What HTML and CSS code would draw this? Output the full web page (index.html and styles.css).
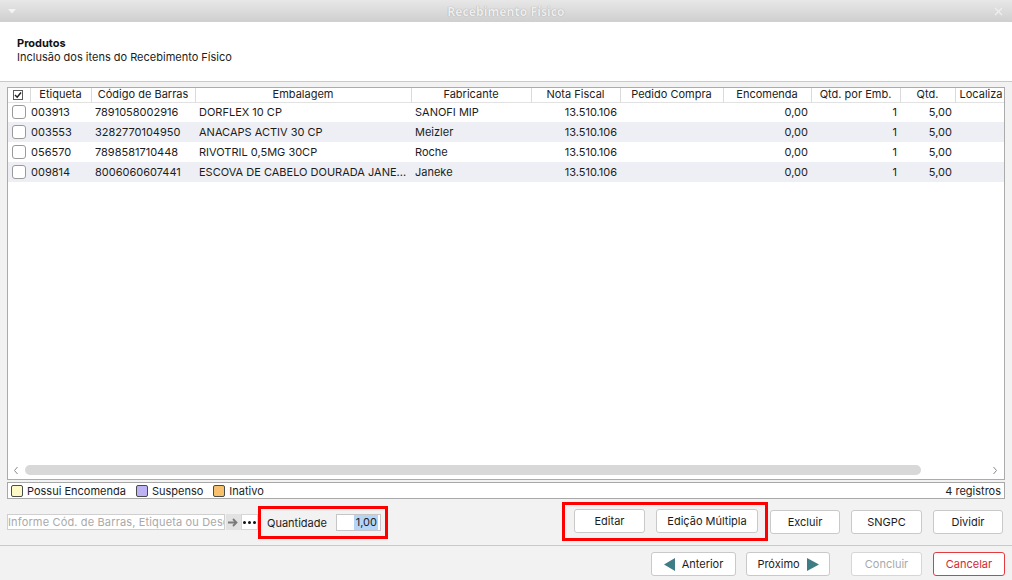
FILE: index.html
```html
<!DOCTYPE html>
<html lang="pt-BR">
<head>
<meta charset="utf-8">
<title>Recebimento Físico</title>
<link rel="stylesheet" href="styles.css">
</head>
<body>
<div class="window">
  <div class="titlebar">
    <div class="tb-left">
      <svg class="tb-menu" width="8" height="5" viewBox="0 0 8 5"><path d="M0 0H8L4 4.5Z" fill="#f4f4f4"/></svg>
    </div>
    <div class="tb-title">Recebimento Físico</div>
    <div class="tb-right">
      <svg class="tb-close" width="9" height="9" viewBox="0 0 9 9"><path d="M1 1L8 8M8 1L1 8" stroke="#eeeeee" stroke-width="1.4"/></svg>
    </div>
  </div>

  <div class="header">
    <div class="h-title">Produtos</div>
    <div class="h-sub">Inclusão dos itens do Recebimento Físico</div>
  </div>

  <div class="content">
    <div class="grid-box">
      <div class="grid-scroll">
        <table class="grid">
          <colgroup>
            <col class="c-chk"><col class="c-etq"><col class="c-cod"><col class="c-emb"><col class="c-fab"><col class="c-nf"><col class="c-ped"><col class="c-enc"><col class="c-qpe"><col class="c-qtd"><col class="c-loc">
          </colgroup>
          <thead>
            <tr>
              <th class="chk-cell"><span class="hchk"><svg width="8" height="8" viewBox="0 0 8 8"><path d="M1 4L3.2 6.2L7 1.5" fill="none" stroke="#222" stroke-width="1.5"/></svg></span></th>
              <th>Etiqueta</th>
              <th>Código de Barras</th>
              <th>Embalagem</th>
              <th>Fabricante</th>
              <th>Nota Fiscal</th>
              <th>Pedido Compra</th>
              <th>Encomenda</th>
              <th>Qtd. por Emb.</th>
              <th>Qtd.</th>
              <th class="left">Localiza</th>
            </tr>
          </thead>
          <tbody>
            <tr>
              <td class="chk-cell"><span class="rchk"></span></td>
              <td class="etq">003913</td><td>7891058002916</td><td>DORFLEX 10 CP</td><td>SANOFI MIP</td>
              <td class="num">13.510.106</td><td></td><td class="num">0,00</td><td class="num">1</td><td class="num">5,00</td><td></td>
            </tr>
            <tr class="alt">
              <td class="chk-cell"><span class="rchk"></span></td>
              <td class="etq">003553</td><td>3282770104950</td><td>ANACAPS ACTIV 30 CP</td><td>Meizler</td>
              <td class="num">13.510.106</td><td></td><td class="num">0,00</td><td class="num">1</td><td class="num">5,00</td><td></td>
            </tr>
            <tr>
              <td class="chk-cell"><span class="rchk"></span></td>
              <td class="etq">056570</td><td>7898581710448</td><td>RIVOTRIL 0,5MG 30CP</td><td>Roche</td>
              <td class="num">13.510.106</td><td></td><td class="num">0,00</td><td class="num">1</td><td class="num">5,00</td><td></td>
            </tr>
            <tr class="alt">
              <td class="chk-cell"><span class="rchk"></span></td>
              <td class="etq">009814</td><td>8006060607441</td><td>ESCOVA DE CABELO DOURADA JANE...</td><td>Janeke</td>
              <td class="num">13.510.106</td><td></td><td class="num">0,00</td><td class="num">1</td><td class="num">5,00</td><td></td>
            </tr>
          </tbody>
        </table>
      </div>
      <div class="hscroll">
        <svg class="chev" width="6" height="9" viewBox="0 0 6 9"><path d="M4.5 1L1.5 4.5L4.5 8" fill="none" stroke="#8a8a8a" stroke-width="1"/></svg>
        <div class="track"><div class="thumb"></div></div>
        <svg class="chev" width="6" height="9" viewBox="0 0 6 9"><path d="M1.5 1L4.5 4.5L1.5 8" fill="none" stroke="#8a8a8a" stroke-width="1"/></svg>
      </div>
    </div>

    <div class="legend">
      <span class="sw sw-yellow"></span><span class="lg-label">Possui Encomenda</span>
      <span class="sw sw-purple"></span><span class="lg-label">Suspenso</span>
      <span class="sw sw-orange"></span><span class="lg-label">Inativo</span>
      <span class="lg-count">4 registros</span>
    </div>

    <div class="controls">
      <div class="ctl-left">
        <div class="search">Informe Cód. de Barras, Etiqueta ou Descrição</div>
        <div class="go-btn"><svg width="11" height="9" viewBox="0 0 11 9"><path d="M0 4.5H8M5 1L8.5 4.5L5 8" fill="none" stroke="#7a7a7a" stroke-width="1.8"/></svg></div>
        <div class="dots-btn"><svg width="13" height="3" viewBox="0 0 13 3"><circle cx="1.5" cy="1.5" r="1.5" fill="#111"/><circle cx="6.5" cy="1.5" r="1.5" fill="#111"/><circle cx="11.5" cy="1.5" r="1.5" fill="#111"/></svg></div>
        <div class="mark mark-qty">
          <span class="qty-label">Quantidade</span>
          <div class="qty-input"><span class="sel">1,00</span></div>
        </div>
      </div>
      <div class="ctl-right">
        <div class="mark mark-edit">
          <button class="btn w71">Editar</button>
          <button class="btn w102">Edição Múltipla</button>
        </div>
        <button class="btn w70 after-mark">Excluir</button>
        <button class="btn w71">SNGPC</button>
        <button class="btn w70">Dividir</button>
      </div>
    </div>
  </div>

  <div class="footer">
    <button class="btn nav w85">
      <svg width="11" height="13" viewBox="0 0 11 13"><path d="M11 0V13L0 6.5Z" fill="#3e7d85"/></svg>
      <span>Anterior</span>
    </button>
    <button class="btn nav w84">
      <span>Próximo</span>
      <svg width="12" height="13" viewBox="0 0 12 13"><path d="M0 0V13L12 6.5Z" fill="#3e7d85"/></svg>
    </button>
    <button class="btn w71 disabled gap-l">Concluir</button>
    <button class="btn w72 danger gap-c">Cancelar</button>
  </div>
</div>
</body>
</html>
```

FILE: styles.css
```css
* { box-sizing: border-box; }

html, body {
  margin: 0;
  padding: 0;
  width: 1012px;
  height: 580px;
  overflow: hidden;
  background: #f2f2f2;
  font-family: "Inter", "Noto Sans", sans-serif;
  font-size: 11px;
  color: #1c1c1c;
}

.window {
  display: flex;
  flex-direction: column;
  height: 580px;
}

/* ---------- title bar ---------- */
.titlebar {
  height: 22px;
  flex: none;
  display: grid;
  grid-template-columns: 1fr auto 1fr;
  align-items: center;
  background: linear-gradient(#e7e7e7, #cfcfcf);
}
.tb-left { padding-left: 8px; display: flex; align-items: center; }
.tb-right { display: flex; justify-content: flex-end; padding-right: 9px; align-items: center; }
.tb-title {
  font-family: "Open Sans", "Noto Sans", sans-serif;
  font-weight: 700;
  font-size: 12px;
  color: #eeeeee;
  text-shadow: 0 0 1px #8e8e8e;
  letter-spacing: 0.1px;
}

/* ---------- header ---------- */
.header {
  height: 60px;
  flex: none;
  background: #ffffff;
  border-bottom: 1px solid #c9c9c9;
  padding: 14px 17px 0;
  line-height: 14px;
}
.h-title { font-weight: 700; color: #111; }
.h-sub { color: #1c1c1c; }

/* ---------- content ---------- */
.content {
  flex: none;
  padding: 5px 7px 0 7px;
}

.grid-box {
  height: 393px;
  border: 1px solid #ababab;
  background: #ffffff;
  display: flex;
  flex-direction: column;
  width: 998px;
}
.grid-scroll {
  flex: 1;
  overflow: hidden;
}
.grid {
  border-collapse: collapse;
  table-layout: fixed;
  width: 1047px;
}
.c-chk { width: 22px; }
.c-etq { width: 61px; }
.c-cod { width: 104px; }
.c-emb { width: 216px; }
.c-fab { width: 120px; }
.c-nf  { width: 89px; }
.c-ped { width: 103px; }
.c-enc { width: 88px; }
.c-qpe { width: 89px; }
.c-qtd { width: 55px; }
.c-loc { width: 100px; }

.grid th {
  height: 14px;
  line-height: 13px;
  font-weight: 400;
  color: #222;
  text-align: center;
  padding: 0 3px;
  border-right: 1px solid #dadada;
  border-bottom: 1px solid #e2e2e2;
  white-space: nowrap;
  overflow: hidden;
}
.grid th.left { text-align: left; padding-left: 4px; }
.grid td {
  height: 20px;
  padding: 0 3px 0 4px;
  white-space: nowrap;
  overflow: hidden;
  color: #1c1c1c;
}
.grid td.etq { padding-left: 1px; }
.grid td.num { text-align: right; padding-right: 3px; }
.grid tr.alt td { background: #eeeff4; }
.grid .chk-cell { padding: 0 0 0 4px; text-align: left; }

.hchk {
  display: inline-flex;
  align-items: center;
  justify-content: center;
  width: 10px;
  height: 10px;
  border: 1px solid #5a5a5a;
  background: #fff;
  vertical-align: middle;
  margin-left: 1px;
}
.rchk {
  display: block;
  width: 14px;
  height: 14px;
  border: 1px solid #9a9a9a;
  border-radius: 3px;
  background: #fff;
}

.hscroll {
  height: 17px;
  flex: none;
  display: flex;
  align-items: center;
  padding: 0 6px 1px 5px;
  gap: 6px;
}
.hscroll .chev { flex: none; }
.track { flex: 1; height: 10px; }
.thumb {
  width: 896px;
  height: 10px;
  border-radius: 5px;
  background: #d8d8d8;
}

/* ---------- legend ---------- */
.legend {
  margin-top: 2px;
  height: 17px;
  width: 998px;
  border: 1px solid #a8a8a8;
  background: #fff;
  display: flex;
  align-items: center;
  padding: 0 3px 0 3px;
  line-height: 14px;
}
.sw {
  width: 12px;
  height: 12px;
  border: 1px solid #4a4a4a;
  border-radius: 2px;
  flex: none;
  margin-right: 4px;
}
.sw-yellow { background: #fdf9c6; }
.sw-purple { background: #bdb3f4; }
.sw-orange { background: #f7c06c; }
.lg-label { margin-right: 10px; }
.lg-count { margin-left: auto; }

/* ---------- controls ---------- */
.controls {
  height: 46px;
  display: flex;
  align-items: center;
  justify-content: space-between;
}
.ctl-left, .ctl-right {
  display: flex;
  align-items: center;
}
.ctl-right { margin-right: 2px; }
.search {
  width: 218px;
  height: 16px;
  border: 1px solid #cfcfcf;
  background: #fff;
  color: #a9a9a9;
  font-size: 11px;
  line-height: 14px;
  white-space: nowrap;
  overflow: hidden;
  letter-spacing: 0.15px;
}
.go-btn {
  width: 15px;
  height: 16px;
  margin-left: 1px;
  background: #e2e2e2;
  display: flex;
  align-items: center;
  justify-content: center;
}
.dots-btn {
  width: 17px;
  height: 16px;
  background: #fff;
  border: 1px solid #d6d6d6;
  display: flex;
  align-items: center;
  justify-content: center;
}
.mark {
  border: 3px solid #ff0000;
  display: flex;
  align-items: center;
}
.mark-qty {
  height: 33px;
  width: 130px;
  padding: 0 6px;
  margin-top: 1px;
}
.qty-label { color: #1c1c1c; margin-right: 9px; flex: none; }
.qty-input {
  width: 45px;
  flex: none;
  height: 17px;
  border: 1px solid #c6c6c6;
  background: #fff;
  display: flex;
  justify-content: flex-end;
  align-items: center;
  padding-right: 2px;
}
.sel {
  background: #b5d5f8;
  line-height: 15px;
  padding: 0 1px 0 2px;
}
.mark-edit {
  height: 39px;
  padding: 0 7px 0 9px;
  gap: 11px;
  margin-right: 2px;
  margin-top: -2px;
}

.btn {
  height: 24px;
  border: 1px solid #c9c9c9;
  border-radius: 3px;
  background: #fff;
  font-family: "Inter", "Noto Sans", sans-serif;
  font-size: 11px;
  color: #1c1c1c;
  padding: 0;
  display: inline-flex;
  align-items: center;
  justify-content: center;
}
.ctl-right > .btn + .btn { margin-left: 11px; }
.w70 { width: 70px; }
.w71 { width: 71px; }
.w72 { width: 72px; }
.w84 { width: 84px; }
.w85 { width: 85px; }
.w102 { width: 102px; }

/* ---------- footer ---------- */
.footer {
  flex: none;
  border-top: 1px solid #c9c9c9;
  padding: 6px 7px 0 0;
  display: flex;
  justify-content: flex-end;
  gap: 10px;
}
.nav { gap: 7px; }
.footer .gap-l { margin-left: 11px; }
.footer .gap-c { margin-left: 1px; }
.btn.disabled { color: #a9a9a9; border-color: #d6d6d6; }
.btn.danger { color: #d22b32; border-color: #e23c40; }
```
